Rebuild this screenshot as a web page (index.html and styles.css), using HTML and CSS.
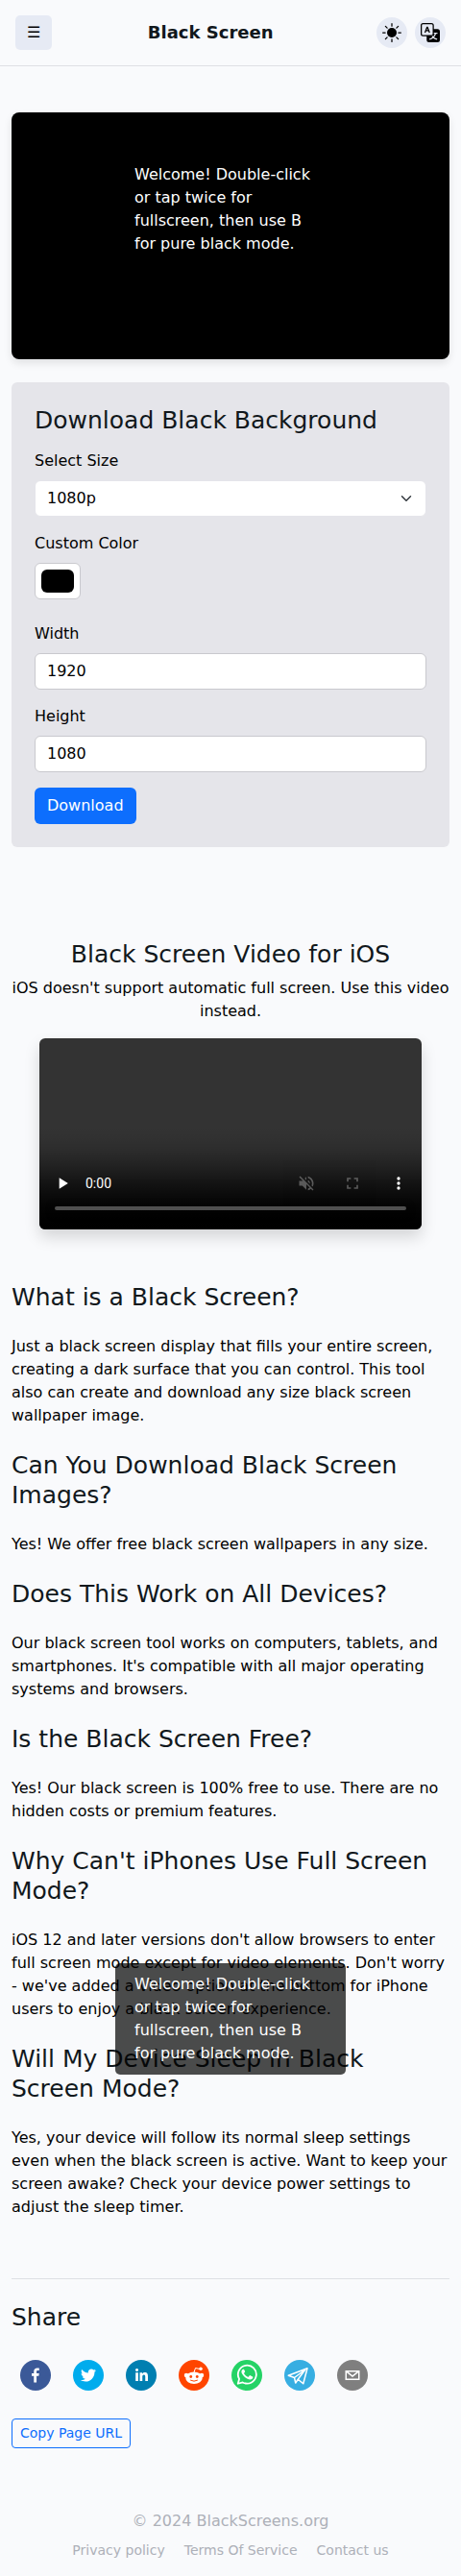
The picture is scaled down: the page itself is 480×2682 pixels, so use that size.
FILE: index.html
```html
<!DOCTYPE html>
<html lang="en">
<head>
    <meta charset="UTF-8">
    <meta name="viewport" content="width=device-width, initial-scale=1.0">
    <title>Black Screen</title>
    <link rel="stylesheet" href="styles.css">
</head>
<body>
    <header class="site-header">
        <button class="menu-btn" type="button" aria-label="Menu">☰</button>
        <h1 class="site-title">Black Screen</h1>
        <div class="header-actions">
            <button class="icon-btn" type="button" aria-label="Toggle theme">
                <svg width="20" height="20" viewBox="0 0 16 16">
                    <circle cx="8" cy="8" r="4"/>
                    <path d="M8 .5v2M8 13.5v2M.5 8h2M13.5 8h2M2.7 2.7l1.4 1.4M11.9 11.9l1.4 1.4M2.7 13.3l1.4-1.4M11.9 4.1l1.4-1.4" stroke="#000" stroke-linecap="round"/>
                </svg>
            </button>
            <button class="icon-btn" type="button" aria-label="Change language">
                <svg width="20" height="20" viewBox="0 0 16 16">
                    <path d="M0 2a2 2 0 0 1 2-2h7a2 2 0 0 1 2 2v3h3a2 2 0 0 1 2 2v7a2 2 0 0 1-2 2H7a2 2 0 0 1-2-2v-3H2a2 2 0 0 1-2-2V2zm2-1a1 1 0 0 0-1 1v7a1 1 0 0 0 1 1h7a1 1 0 0 0 1-1V2a1 1 0 0 0-1-1H2zm7.138 9.995c.193.301.402.583.63.846-.748.575-1.673 1.001-2.768 1.292.178.217.451.635.555.867 1.125-.359 2.08-.844 2.886-1.494.777.665 1.739 1.165 2.93 1.472.133-.254.414-.673.629-.89-1.125-.253-2.057-.694-2.82-1.284.681-.747 1.222-1.651 1.621-2.757H14V8h-3v1.047h.765c-.318.844-.74 1.546-1.272 2.13a6.066 6.066 0 0 1-.415-.492 1.988 1.988 0 0 1-.94.31z"/>
                    <path d="M3.6 8l1.7-4.6h.4L7.4 8M4.2 6.3h2.6" fill="none" stroke="#000"/>
                </svg>
            </button>
        </div>
    </header>

    <main class="container">
        <div class="black-screen">
            <div class="tip">Welcome! Double-click or tap twice for fullscreen, then use B for pure black mode.</div>
        </div>

        <form class="download-card">
            <h2>Download Black Background</h2>
            <label for="size">Select Size</label>
            <select id="size" class="field">
                <option>720p</option>
                <option selected>1080p</option>
                <option>4K</option>
            </select>
            <label for="color">Custom Color</label>
            <input id="color" class="field color-field" type="color" value="#000000">
            <label for="width">Width</label>
            <input id="width" class="field" type="text" inputmode="numeric" value="1920">
            <label for="height">Height</label>
            <input id="height" class="field" type="text" inputmode="numeric" value="1080">
            <button class="download-btn" type="button">Download</button>
        </form>

        <section class="video-section">
            <h2>Black Screen Video for iOS</h2>
            <p>iOS doesn't support automatic full screen. Use this video instead.</p>
            <div class="video-wrap">
                <video class="video" controls muted preload="none">
                    <source src="black-screen.mp4" type="video/mp4">
                </video>
            </div>
        </section>

        <section class="faq">
            <h2>What is a Black Screen?</h2>
            <p>Just a black screen display that fills your entire screen, creating a dark surface that you can control. This tool also can create and download any size black screen wallpaper image.</p>
            <h2>Can You Download Black Screen Images?</h2>
            <p>Yes! We offer free black screen wallpapers in any size.</p>
            <h2>Does This Work on All Devices?</h2>
            <p>Our black screen tool works on computers, tablets, and smartphones. It's compatible with all major operating systems and browsers.</p>
            <h2>Is the Black Screen Free?</h2>
            <p>Yes! Our black screen is 100% free to use. There are no hidden costs or premium features.</p>
            <h2>Why Can't iPhones Use Full Screen Mode?</h2>
            <p>iOS 12 and later versions don't allow browsers to enter full screen mode except for video elements. Don't worry - we've added a video option at the bottom for iPhone users to enjoy a black screen experience.</p>
            <h2>Will My Device Sleep in Black Screen Mode?</h2>
            <p>Yes, your device will follow its normal sleep settings even when the black screen is active. Want to keep your screen awake? Check your device power settings to adjust the sleep timer.</p>
            <div class="tip tip-floating">Welcome! Double-click or tap twice for fullscreen, then use B for pure black mode.</div>
        </section>

        <section class="share">
            <h2>Share</h2>
            <div class="share-icons">
                <button type="button" aria-label="facebook">
                    <svg viewBox="0 0 64 64">
                        <circle cx="32" cy="32" r="32" fill="#3b5998"/>
                        <path fill="#fff" d="M34.1,47V33.3h4.6l0.7-5.3h-5.3v-3.4c0-1.5,0.4-2.6,2.6-2.6l2.8,0v-4.8c-0.5-0.1-2.2-0.2-4.1-0.2c-4.1,0-6.9,2.5-6.9,7V28H24v5.3h4.5V47H34.1z"/>
                    </svg>
                </button>
                <button type="button" aria-label="twitter">
                    <svg viewBox="0 0 64 64">
                        <circle cx="32" cy="32" r="32" fill="#00aced"/>
                        <path fill="#fff" d="M48,22.1c-1.2,0.5-2.4,0.9-3.8,1c1.4-0.8,2.4-2.1,2.9-3.6c-1.3,0.8-2.7,1.3-4.2,1.6C41.7,19.8,40,19,38.2,19c-3.6,0-6.6,2.9-6.6,6.6c0,0.5,0.1,1,0.2,1.5c-5.5-0.3-10.3-2.9-13.5-6.9c-0.6,1-0.9,2.1-0.9,3.3c0,2.3,1.2,4.3,2.9,5.5c-1.1,0-2.1-0.3-3-0.8c0,0,0,0.1,0,0.1c0,3.2,2.3,5.8,5.3,6.4c-0.6,0.1-1.1,0.2-1.7,0.2c-0.4,0-0.8,0-1.2-0.1c0.8,2.6,3.3,4.5,6.1,4.6c-2.2,1.8-5.1,2.8-8.2,2.8c-0.5,0-1.1,0-1.6-0.1c2.9,1.9,6.4,2.9,10.1,2.9c12.1,0,18.7-10,18.7-18.7c0-0.3,0-0.6,0-0.8C46,24.5,47.1,23.4,48,22.1z"/>
                    </svg>
                </button>
                <button type="button" aria-label="linkedin">
                    <svg viewBox="0 0 64 64">
                        <circle cx="32" cy="32" r="32" fill="#007fb1"/>
                        <path fill="#fff" d="M20.4,44h5.4V26.6h-5.4V44z M23.1,18c-1.7,0-3.1,1.4-3.1,3.1c0,1.7,1.4,3.1,3.1,3.1c1.7,0,3.1-1.4,3.1-3.1C26.2,19.4,24.8,18,23.1,18z M39.5,26.2c-2.6,0-4.4,1.4-5.1,2.8h-0.1v-2.4h-5.2V44h5.4v-8.6c0-2.3,0.4-4.5,3.2-4.5c2.8,0,2.8,2.6,2.8,4.6V44H46v-9.5C46,29.8,45,26.2,39.5,26.2z"/>
                    </svg>
                </button>
                <button type="button" aria-label="reddit">
                    <svg viewBox="0 0 64 64">
                        <circle cx="32" cy="32" r="32" fill="#ff4500"/>
                        <circle cx="16" cy="32" r="4.500" fill="#fff"/>
                        <circle cx="48" cy="32" r="4.500" fill="#fff"/>
                        <ellipse cx="32" cy="37.500" rx="17.500" ry="12.500" fill="#fff"/>
                        <path d="M32 26l3-9 9 2" fill="none" stroke="#fff" stroke-width="2"/>
                        <circle cx="46" cy="18.500" r="3.500" fill="#fff"/>
                        <circle cx="25.500" cy="35" r="2.800" fill="#ff4500"/>
                        <circle cx="38.500" cy="35" r="2.800" fill="#ff4500"/>
                        <path d="M25 42.500q7 4 14 0" fill="none" stroke="#ff4500" stroke-width="2" stroke-linecap="round"/>
                    </svg>
                </button>
                <button type="button" aria-label="whatsapp">
                    <svg viewBox="0 0 64 64">
                        <circle cx="32" cy="32" r="32" fill="#25d366"/>
                        <path fill="none" stroke="#fff" stroke-width="3.600" stroke-linejoin="round" d="M13.500 49.500l2.700-9.800a19 19 0 1 1 7.300 7.200z"/>
                        <path fill="#fff" d="M26.500 20.500c-.4-1-.9-1-1.700-1-2 0-4 2-4 5.200 0 3 2.200 6 5.200 9.500 4 4.300 9 7 13 7 3 0 5.400-2 5.700-4.500.1-1 0-1.600-.6-1.900l-5-2.400c-.7-.3-1.200-.2-1.700.4l-2 2.500c-.4.4-.8.5-1.400.2-3.500-1.500-6-3.800-7.700-6.900-.3-.6-.2-1 .2-1.400l1.400-1.700c.3-.5.4-.9.2-1.400z"/>
                    </svg>
                </button>
                <button type="button" aria-label="telegram">
                    <svg viewBox="0 0 64 64">
                        <circle cx="32" cy="32" r="32" fill="#37aee2"/>
                        <path fill="none" stroke="#fff" stroke-width="3" stroke-linejoin="round" d="M8.500 32.500L48 17.500l-8.500 32-11-9-5 7.500-2.500-11zM21 37l22-16-14.500 19.500M21 37l2.500 11"/>
                    </svg>
                </button>
                <button type="button" aria-label="email">
                    <svg viewBox="0 0 64 64">
                        <circle cx="32" cy="32" r="32" fill="#7f7f7f"/>
                        <path fill="#fff" d="M17,22v20h30V22H17z M41.1,25L32,32.1L22.9,25H41.1z M20,39V26.6l12,9.3l12-9.3V39H20z"/>
                    </svg>
                </button>
            </div>
            <button class="copy-btn" type="button">Copy Page URL</button>
        </section>
    </main>

    <footer class="site-footer">
        <div>© 2024 BlackScreens.org</div>
        <nav class="footer-links">
            <a href="#">Privacy policy</a>
            <a href="#">Terms Of Service</a>
            <a href="#">Contact us</a>
        </nav>
    </footer>
</body>
</html>
```

FILE: styles.css
```css
* {
    box-sizing: border-box;
}

body {
    margin: 0;
    background-color: #f9fafc;
    color: #000;
    font-family: "DejaVu Sans", sans-serif;
    font-size: 16px;
    line-height: 24px;
}

button,
input,
select {
    font: inherit;
}

button {
    cursor: pointer;
}

h2 {
    margin: 0;
    color: #11181c;
    font-size: 25px;
    font-weight: 500;
    line-height: 31px;
}

p {
    margin: 0;
}

.site-header {
    display: flex;
    justify-content: space-between;
    align-items: center;
    padding: 16px;
    border-bottom: 1px solid #dee0e4;
}

.menu-btn {
    padding: 6px 12px;
    border: none;
    border-radius: 5px;
    background-color: #e6eaf4;
    color: #000;
}

.site-title {
    margin: 0;
    color: #11181c;
    font-size: 18px;
    font-weight: bold;
}

.header-actions {
    display: flex;
}

.icon-btn {
    display: flex;
    justify-content: center;
    align-items: center;
    width: 32px;
    height: 32px;
    margin-left: 8px;
    padding: 0;
    border: none;
    border-radius: 50%;
    background-color: #e6eaf4;
}

.container {
    padding: 48px 12px 0;
}

.black-screen {
    display: flex;
    justify-content: center;
    align-items: flex-start;
    aspect-ratio: 16 / 9;
    padding-top: 43px;
    border-radius: 8px;
    background-color: #000;
    box-shadow: 0 4px 8px rgba(0, 0, 0, 0.1);
}

.tip {
    width: 240px;
    padding: 10px 20px;
    border-radius: 5px;
    background-color: rgba(0, 0, 0, 0.7);
    color: #fff;
}

.tip-floating {
    position: absolute;
    bottom: 150px;
    left: 50%;
    transform: translateX(-50%);
}

.download-card {
    display: flex;
    flex-direction: column;
    align-items: flex-start;
    margin-top: 24px;
    padding: 24px;
    border-radius: 6px;
    background-color: #e5e5ea;
}

.download-card h2 {
    margin-bottom: 15px;
}

.download-card label {
    margin-bottom: 8px;
}

.field {
    width: 100%;
    height: 38px;
    margin: 0 0 16px;
    padding: 6px 12px;
    border: 1px solid #c9c9ce;
    border-radius: 6px;
    background-color: #fff;
    color: #000;
}

select.field {
    appearance: none;
    border-color: #e5e5ea;
    background-image: url("data:image/svg+xml,%3Csvg xmlns='http://www.w3.org/2000/svg' viewBox='0 0 16 16'%3E%3Cpath fill='none' stroke='%23343a40' stroke-linecap='round' stroke-linejoin='round' stroke-width='2' d='m2 5 6 6 6-6'/%3E%3C/svg%3E");
    background-position: right 12px center;
    background-repeat: no-repeat;
    background-size: 16px 12px;
}

.color-field {
    width: 48px;
    margin-bottom: 24px;
    padding: 6px;
}

.color-field::-webkit-color-swatch-wrapper {
    padding: 0;
}

.color-field::-webkit-color-swatch {
    border: none;
    border-radius: 6px;
}

.download-btn {
    padding: 7px 13px;
    border: none;
    border-radius: 6px;
    background-color: #0d6efd;
    color: #fff;
}

.video-section {
    margin-top: 96px;
    text-align: center;
}

.video-section h2 {
    margin-bottom: 8px;
}

.video-wrap {
    margin-top: 16px;
    padding: 0 29px;
}

.video {
    display: block;
    width: 100%;
    aspect-ratio: 2 / 1;
    border-radius: 6px;
    box-shadow: 0 8px 16px rgba(0, 0, 0, 0.15);
}

.faq {
    position: relative;
    margin-top: 55px;
}

.faq h2,
.faq p {
    margin-bottom: 24px;
}

.share {
    margin-top: 62px;
    padding-top: 24px;
    border-top: 1px solid #dee0e4;
}

.share-icons {
    display: flex;
    gap: 23px;
    margin: 29px 9px;
}

.share-icons button {
    width: 32px;
    height: 32px;
    padding: 0;
    border: none;
    background: none;
}

.share-icons svg {
    display: block;
}

.copy-btn {
    padding: 4px 8px;
    border: 1px solid #0d6efd;
    border-radius: 4px;
    background: none;
    color: #0d6efd;
    font-size: 14px;
    line-height: 21px;
}

.site-footer {
    margin-top: 64px;
    padding-bottom: 16px;
    color: #adb0b8;
    text-align: center;
}

.footer-links {
    display: flex;
    justify-content: center;
    gap: 20px;
    margin-top: 8px;
    font-size: 14px;
    line-height: 21px;
}

.footer-links a {
    color: #adb0b8;
    text-decoration: none;
}
```
